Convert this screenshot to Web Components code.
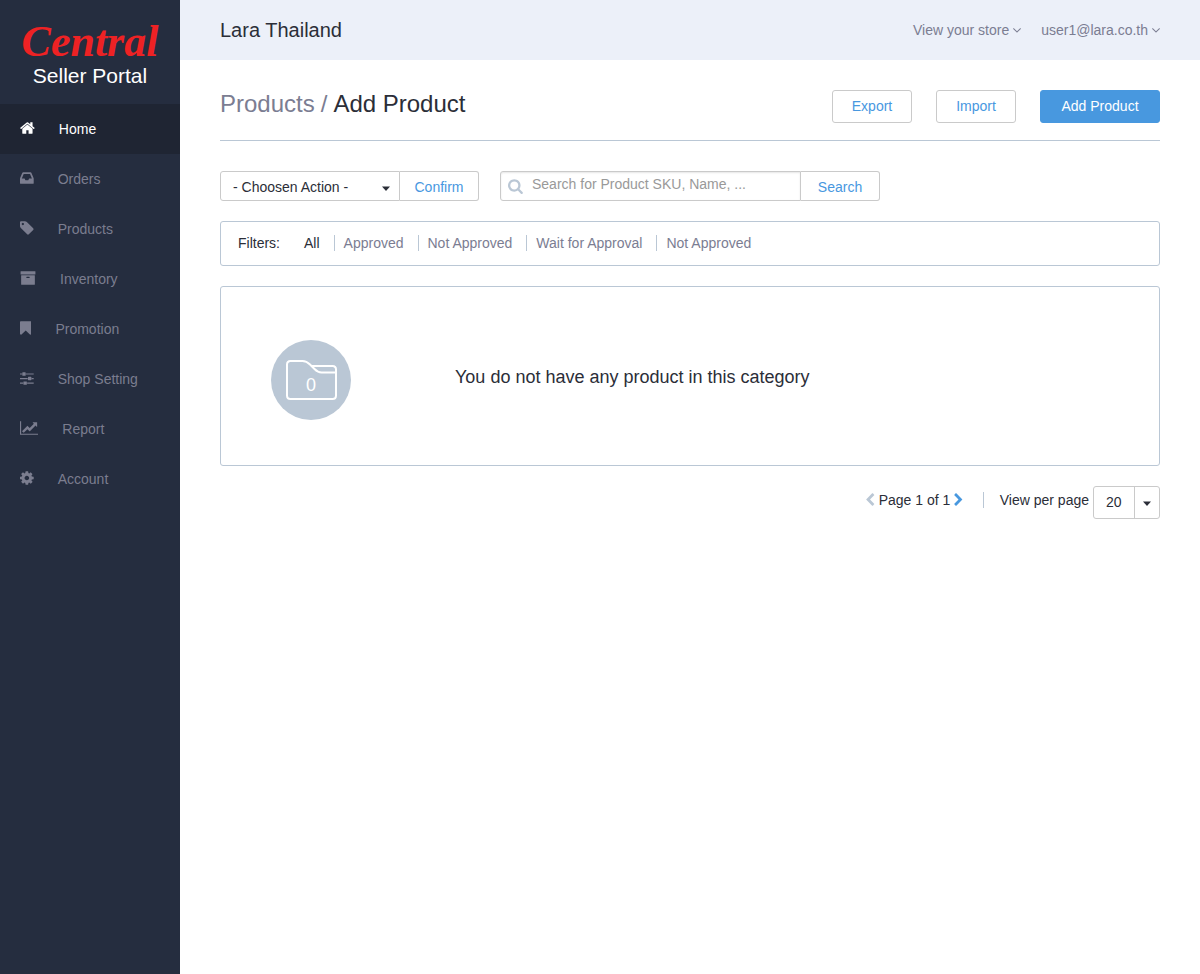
<!DOCTYPE html>
<html lang="en">
<head>
<meta charset="utf-8">
<meta name="viewport" content="width=device-width, initial-scale=1">
<title>Seller Portal – Add Product</title>
<style>
  html { height: 100%; }
  body {
    margin: 0;
    min-height: 100%;
    font: 14px/20px "Liberation Sans", Arial, sans-serif;
    color: #2b2e38;
    background: #fff;
    --muted: #7b7d92;
    --line: #bac7d5;
    --control: #cacaca;
    --blue: #4898df;
  }
</style>
</head>
<body>
<seller-app></seller-app>

<script>
const define = (name, html, setup) => {
  const template = document.createElement('template');
  template.innerHTML = html;
  customElements.define(name, class extends HTMLElement {
    constructor() {
      super();
      this.attachShadow({ mode: 'open' }).append(template.content.cloneNode(true));
    }
    connectedCallback() {
      if (setup && !this.ready) { this.ready = true; setup(this, this.shadowRoot); }
    }
  });
};

/* Icon set: left edge and width of each glyph on an 1792-unit grid, then its outline. */
const ICONS = {
  home: [64, 1664, 'M1472 992v480q0 26-19 45t-45 19h-384v-384h-256v384h-384q-26 0-45-19t-19-45v-480q0-1 .5-3t.5-3l575-474 575 474q1 2 1 6zm223-69l-62 74q-8 9-21 11h-3q-13 0-21-7l-692-577-692 577q-12 8-24 7-13-2-21-11l-62-74q-8-10-7-23.5t11-21.5l719-599q32-26 76-26t76 26l244 204v-195q0-14 9-23t23-9h192q14 0 23 9t9 23v408l219 182q10 8 11 21.5t-7 23.5z'],
  inbox: [128, 1536, 'M1151 960h316q-1-3-2.5-8t-2.5-8l-212-496h-708l-212 496q-1 2-2.5 8t-2.5 8h316l95 192h320zm513 30v482q0 26-19 45t-45 19h-1408q-26 0-45-19t-19-45v-482q0-62 25-123l238-552q10-25 36.5-42t52.5-17h832q26 0 52.5 17t36.5 42l238 552q25 61 25 123z'],
  tag: [128, 1536, 'M576 448q0-53-37.5-90.5t-90.5-37.5-90.5 37.5-37.5 90.5 37.5 90.5 90.5 37.5 90.5-37.5 37.5-90.5zm1067 576q0 53-37 90l-491 492q-39 37-91 37-53 0-90-37l-715-716q-38-37-64.5-101t-26.5-117v-416q0-52 38-90t90-38h416q53 0 117 26.5t102 64.5l715 714q37 39 37 91z'],
  archive: [0, 1792, 'M1088 832q0-26-19-45t-45-19h-256q-26 0-45 19t-19 45 19 45 45 19h256q26 0 45-19t19-45zm576-192v960q0 26-19 45t-45 19h-1408q-26 0-45-19t-19-45v-960q0-26 19-45t45-19h1408q26 0 45 19t19 45zm64-448v256q0 26-19 45t-45 19h-1536q-26 0-45-19t-19-45v-256q0-26 19-45t45-19h1536q26 0 45 19t19 45z'],
  bookmark: [256, 1280, 'M1420 128q23 0 44 9 33 13 52.5 41t19.5 62v1289q0 34-19.5 62t-52.5 41q-19 8-44 8-48 0-83-32l-441-424-441 424q-36 33-83 33-23 0-44-9-33-13-52.5-41t-19.5-62v-1289q0-34 19.5-62t52.5-41q21-9 44-9h1048z'],
  sliders: [128, 1536, 'M480 1408v128h-352v-128h352zm352-128q26 0 45 19t19 45v256q0 26-19 45t-45 19h-256q-26 0-45-19t-19-45v-256q0-26 19-45t45-19h256zm160-384v128h-864v-128h864zm-640-512v128h-224v-128h224zm1312 1024v128h-736v-128h736zm-960-1152q26 0 45 19t19 45v256q0 26-19 45t-45 19h-256q-26 0-45-19t-19-45v-256q0-26 19-45t45-19h256zm640 512q26 0 45 19t19 45v256q0 26-19 45t-45 19h-256q-26 0-45-19t-19-45v-256q0-26 19-45t45-19h256zm320 128v128h-224v-128h224zm0-512v128h-864v-128h864z'],
  chart: [0, 2048, 'M2048 1536v128h-2048v-1536h128v1408h1920zm-128-1248v435q0 21-19.5 29.5t-35.5-7.5l-121-121-633 633q-10 10-23 10t-23-10l-233-233-416 416-192-192 585-585q10-10 23-10t23 10l233 233 464-464-121-121q-16-16-7.5-35.5t29.5-19.5h435q14 0 23 9t9 23z'],
  cog: [128, 1536, 'M1152 896q0-106-75-181t-181-75-181 75-75 181 75 181 181 75 181-75 75-181zm512-109v222q0 12-8 23t-20 13l-185 28q-19 54-39 91 35 50 107 138 10 12 10 25t-9 23q-27 37-99 108t-94 71q-12 0-26-9l-138-108q-44 23-91 38-16 136-29 186-7 28-36 28h-222q-14 0-24.5-8.5t-11.5-21.5l-28-184q-49-16-90-37l-141 107q-10 9-25 9-14 0-25-11-126-114-165-168-7-10-7-23 0-12 8-23 15-21 51-66.5t54-70.5q-27-50-41-99l-183-27q-13-2-21-12.5t-8-23.5v-222q0-12 8-23t19-13l186-28q14-46 39-92-40-57-107-138-10-12-10-24 0-10 9-23 26-36 98.5-107.5t94.5-71.5q13 0 26 10l138 107q44-23 91-38 16-136 29-186 7-28 36-28h222q14 0 24.5 8.5t11.5 21.5l28 184q49 16 90 37l142-107q9-9 24-9 13 0 25 10 129 119 165 170 7 8 7 22 0 12-8 23-15 21-51 66.5t-54 70.5q26 50 41 98l183 28q13 2 21 12.5t8 23.5z'],
  left: [384, 1088, 'M1427 301l-531 531 531 531q19 19 19 45t-19 45l-166 166q-19 19-45 19t-45-19l-742-742q-19-19-19-45t19-45l742-742q19-19 45-19t45 19l166 166q19 19 19 45t-19 45z'],
  right: [320, 1088, 'M1363 877l-742 742q-19 19-45 19t-45-19l-166-166q-19-19-19-45t19-45l531-531-531-531q-19-19-19-45t19-45l166-166q19-19 45-19t45 19l742 742q19 19 19 45t-19 45z'],
  down: [384, 1024, 'M1395 736q0 13-10 23l-466 466q-10 10-23 10t-23-10l-466-466q-10-10-10-23t10-23l50-50q10-10 23-10t23 10l393 393 393-393q10-10 23-10t23 10l50 50q10 10 10 23z'],
  caret: [384, 1024, 'M384 704h1024l-512 560z'],
  search: [64, 1664, 'M1216 832q0-185-131.5-316.5t-316.5-131.5-316.5 131.5-131.5 316.5 131.5 316.5 316.5 131.5 316.5-131.5 131.5-316.5zm512 832q0 52-38 90t-90 38q-54 0-90-38l-343-342q-179 124-399 124-143 0-273.5-55.5t-225-150-150-225-55.5-273.5 55.5-273.5 150-225 225-150 273.5-55.5 273.5 55.5 225 150 150 225 55.5 273.5q0 220-124 399l343 343q37 37 37 90z']
};

define('app-icon', `
  <style>
    :host { display: inline-flex; flex: none; --size: 14px; }
    svg { display: block; height: var(--size); width: auto; fill: currentColor; }
  </style>
  <svg aria-hidden="true"><path/></svg>`, (el, root) => {
  const [x, w, d] = ICONS[el.getAttribute('name')];
  const svg = root.querySelector('svg');
  svg.setAttribute('viewBox', `${x} 0 ${w} 1792`);
  svg.firstElementChild.setAttribute('d', d);
});

define('brand-logo', `
  <style>
    :host { display: block; text-align: center; height: 104px; box-sizing: border-box; padding-top: 20px; }
    a { color: #fff; text-decoration: none; display: block; }
    .name { display: block; font: italic bold 44px/44px "Liberation Serif", "Times New Roman", serif; color: #ee2224; }
    .sub { display: block; font-size: 21px; line-height: 24px; }
  </style>
  <a href="#"><span class="name">Central</span><span class="sub">Seller Portal</span></a>`);

define('nav-item', `
  <style>
    :host { display: block; color: #7b7d8f; }
    :host([active]) { background: #1f2533; color: #fff; }
    a { display: flex; align-items: center; height: 50px; padding: 0 20px; gap: 24px; color: inherit; text-decoration: none; }
    app-icon { --size: 16px; padding-bottom: 2px; }
  </style>
  <a href="#"><slot></slot></a>`, (el, root) => {
  const icon = document.createElement('app-icon');
  icon.setAttribute('name', el.getAttribute('icon'));
  const link = root.querySelector('a');
  link.prepend(icon);
  if (el.hasAttribute('active')) link.setAttribute('aria-current', 'page');
});

define('side-bar', `
  <style>:host { display: block; background: #252d3f; }</style>
  <brand-logo></brand-logo>
  <nav aria-label="Main">
    <nav-item icon="home" active>Home</nav-item>
    <nav-item icon="inbox">Orders</nav-item>
    <nav-item icon="tag">Products</nav-item>
    <nav-item icon="archive">Inventory</nav-item>
    <nav-item icon="bookmark">Promotion</nav-item>
    <nav-item icon="sliders">Shop Setting</nav-item>
    <nav-item icon="chart">Report</nav-item>
    <nav-item icon="cog">Account</nav-item>
  </nav>`);

define('top-bar', `
  <style>
    :host { display: flex; align-items: center; justify-content: space-between; height: 60px; padding: 0 40px; background: #ecf0f9; }
    .shop { font-size: 20px; }
    nav { display: flex; gap: 20px; }
    a { display: flex; align-items: center; gap: 4px; color: var(--muted); text-decoration: none; }
  </style>
  <span class="shop">Lara Thailand</span>
  <nav aria-label="Account">
    <a href="#">View your store<app-icon name="down"></app-icon></a>
    <a href="#">user1@lara.co.th<app-icon name="down"></app-icon></a>
  </nav>`);

define('ui-button', `
  <style>
    :host { display: inline-block; min-width: 80px; }
    button {
      width: 100%; height: 33px; padding: 0 12px 2px; box-sizing: border-box;
      font: inherit; color: var(--blue); background: #fff;
      border: 1px solid var(--control); border-radius: 3px; cursor: pointer;
    }
    :host([primary]) { min-width: 120px; }
    :host([primary]) button { color: #fff; background: var(--blue); border-color: var(--blue); }
    :host([joined]) { min-width: 79px; }
    :host([joined]) button { height: 30px; padding: 2px 12px 0; border-left: 0; border-radius: 0 3px 3px 0; }
  </style>
  <button type="button"><slot></slot></button>`);

define('page-head', `
  <style>
    :host { display: flex; justify-content: space-between; align-items: flex-start; padding: 30px 0 17px; border-bottom: 1px solid var(--line); }
    h1 { margin: 0; font-size: 24px; line-height: 28px; font-weight: normal; display: flex; gap: 6px; }
    a { color: var(--muted); text-decoration: none; }
    .slash { color: var(--muted); }
    .actions { display: flex; gap: 24px; }
  </style>
  <h1><a href="#">Products</a><span class="slash">/</span><span>Add Product</span></h1>
  <div class="actions">
    <ui-button>Export</ui-button>
    <ui-button>Import</ui-button>
    <ui-button primary>Add Product</ui-button>
  </div>`);

define('tool-row', `
  <style>
    :host { display: flex; flex-wrap: wrap; gap: 21px; padding: 30px 0 20px; }
    form { display: flex; margin: 0; }
    .pick, .find { display: grid; align-items: center; }
    .pick > *, .find > * { grid-area: 1 / 1; }
    .pick { width: 180px; }
    .find { width: 301px; }
    select, input {
      appearance: none; margin: 0; width: 100%; height: 30px; box-sizing: border-box;
      font: inherit; color: inherit; background: #fff;
      border: 1px solid var(--control); border-radius: 3px 0 0 3px;
    }
    select { padding: 2px 28px 0 12px; }
    input { padding: 0 8px 4px 31px; box-shadow: inset 0 1px 2px rgba(0,0,0,.1); }
    input::placeholder { color: #999; opacity: 1; }
    app-icon { pointer-events: none; z-index: 1; }
    .pick app-icon { justify-self: end; margin: 4px 10px 0; }
    .find app-icon { justify-self: start; margin: 0 8px; color: var(--line); --size: 16px; }
  </style>
  <form>
    <span class="pick">
      <select aria-label="Action"><option>- Choosen Action -</option></select>
      <app-icon name="caret"></app-icon>
    </span>
    <ui-button joined>Confirm</ui-button>
  </form>
  <form role="search">
    <span class="find">
      <input type="search" aria-label="Search products" placeholder="Search for Product SKU, Name, ...">
      <app-icon name="search"></app-icon>
    </span>
    <ui-button joined>Search</ui-button>
  </form>`);

define('filter-bar', `
  <style>
    :host { display: flex; align-items: center; flex-wrap: wrap; gap: 15px; box-sizing: border-box; min-height: 45px; padding: 0 17px 2px; border: 1px solid var(--line); border-radius: 3px; }
    nav { display: flex; flex-wrap: wrap; }
    a { color: var(--muted); text-decoration: none; line-height: 16px; padding: 0 14px 0 9px; }
    a + a { border-left: 1px solid var(--line); }
    a[aria-current] { color: inherit; }
  </style>
  <span>Filters:</span>
  <nav aria-label="Filters">
    <a href="#" aria-current="true">All</a>
    <a href="#">Approved</a>
    <a href="#">Not Approved</a>
    <a href="#">Wait for Approval</a>
    <a href="#">Not Approved</a>
  </nav>`);

define('empty-state', `
  <style>
    :host { display: flex; gap: 104px; margin-top: 20px; padding: 53px 50px 45px; border: 1px solid var(--line); border-radius: 3px; }
    .badge { display: grid; place-items: center; flex: none; width: 80px; height: 80px; border-radius: 50%; background: var(--line); color: #fff; }
    .badge > * { grid-area: 1 / 1; }
    svg { width: 80px; height: 80px; fill: none; stroke: #fff; stroke-width: 2; }
    .count { font-size: 18px; line-height: 20px; padding-top: 10px; }
    p { margin: 0; padding-top: 25px; font-size: 18px; line-height: 24px; }
  </style>
  <div class="badge">
    <svg viewBox="0 0 80 80" aria-hidden="true">
      <path d="M65 32.500V55.500Q65 59 61.500 59H19.500Q16 59 16 55.500V24.500Q16 21 19.500 21H31.500C35 21 36.500 22 39 24.500L43.500 29C46 31.500 47.500 32.500 50.500 32.500H65V29.500Q65 26 61.500 26H40.500"/>
    </svg>
    <span class="count">0</span>
  </div>
  <p>You do not have any product in this category</p>`);

define('page-pager', `
  <style>
    :host { display: flex; justify-content: flex-end; align-items: flex-start; padding-top: 20px; }
    .pages, .size { display: flex; }
    .pages { align-items: center; gap: 4px; margin-top: 6px; padding-right: 20px; border-right: 1px solid var(--line); line-height: 16px; }
    .size { gap: 4px; padding-left: 16px; }
    label { line-height: 28px; }
    button { display: flex; padding: 0; border: 0; background: none; color: var(--blue); cursor: pointer; }
    button:disabled { color: var(--line); }
    .pick { display: grid; width: 67px; }
    .pick > * { grid-area: 1 / 1; }
    select { appearance: none; margin: 0; height: 33px; box-sizing: border-box; padding: 0 26px 2px 12px; font: inherit; color: inherit; background: #fff; border: 1px solid var(--control); border-radius: 3px; }
    .arrow { justify-self: end; display: grid; place-items: center; width: 24px; margin: 1px; border-left: 1px solid var(--control); pointer-events: none; z-index: 1; }
  </style>
  <div class="pages">
    <button type="button" aria-label="Previous page" disabled><app-icon name="left"></app-icon></button>
    <span>Page 1 of 1</span>
    <button type="button" aria-label="Next page"><app-icon name="right"></app-icon></button>
  </div>
  <div class="size">
    <label for="per-page">View per page</label>
    <span class="pick">
      <select id="per-page"><option>20</option></select>
      <span class="arrow"><app-icon name="caret"></app-icon></span>
    </span>
  </div>`);

define('seller-app', `
  <style>
    :host { display: grid; grid-template-columns: 180px minmax(0, 1fr); min-height: 100vh; }
    main { padding: 0 40px 40px; }
  </style>
  <side-bar></side-bar>
  <div>
    <top-bar></top-bar>
    <main>
      <page-head></page-head>
      <tool-row></tool-row>
      <filter-bar></filter-bar>
      <empty-state></empty-state>
      <page-pager></page-pager>
    </main>
  </div>`);
</script>
</body>
</html>
